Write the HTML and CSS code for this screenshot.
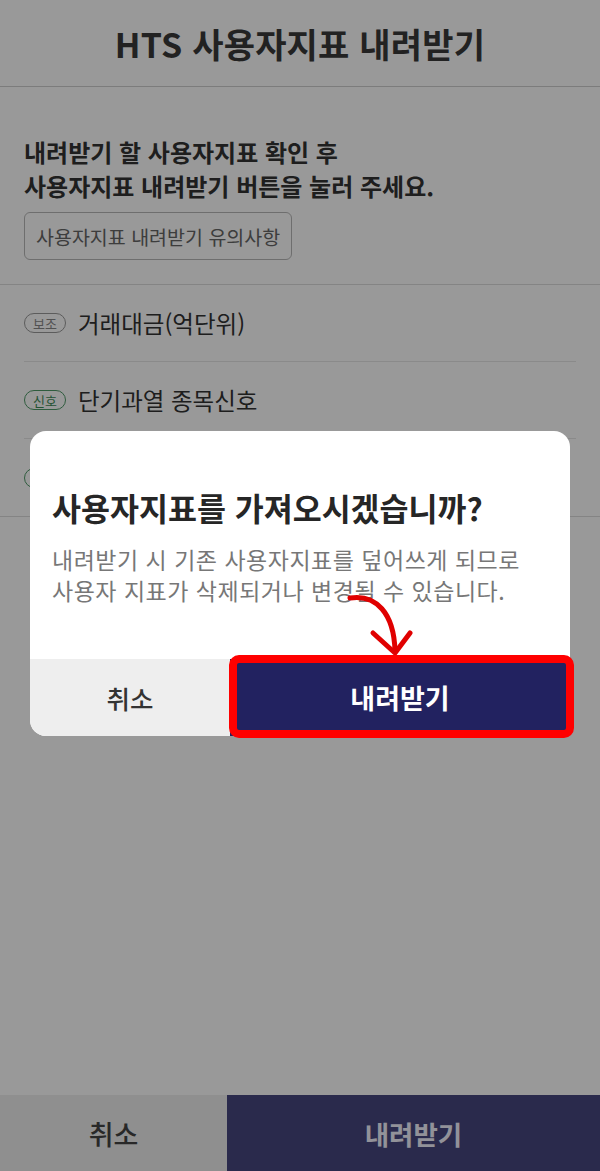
FILE: index.html
```html
<!DOCTYPE html>
<html lang="ko">
<head>
    <meta charset="UTF-8">
    <meta name="viewport" content="width=device-width, initial-scale=1.0">
    <title>HTS 사용자지표 내려받기</title>
    <link rel="stylesheet" href="styles.css">
</head>
<body>
    <div class="page">
        <header class="header">
            <h1>HTS 사용자지표 내려받기</h1>
        </header>

        <section class="guide">
            <p class="guide-text">내려받기 할 사용자지표 확인 후<br>사용자지표 내려받기 버튼을 눌러 주세요.</p>
            <button class="notice-button">사용자지표 내려받기 유의사항</button>
        </section>

        <ul class="indicator-list">
            <li class="indicator">
                <span class="tag">보조</span>
                <span class="indicator-name">거래대금(억단위)</span>
            </li>
            <li class="indicator">
                <span class="tag tag-signal">신호</span>
                <span class="indicator-name">단기과열 종목신호</span>
            </li>
            <li class="indicator">
                <span class="tag tag-signal">신호</span>
            </li>
        </ul>

        <div class="spacer"></div>

        <footer class="bottom-bar">
            <button class="bottom-cancel">취소</button>
            <button class="bottom-confirm">내려받기</button>
        </footer>
    </div>

    <div class="dim">
        <div class="dialog">
            <h2 class="dialog-title">사용자지표를 가져오시겠습니까?</h2>
            <p class="dialog-text">내려받기 시 기존 사용자지표를 덮어쓰게 되므로<br>사용자 지표가 삭제되거나 변경될 수 있습니다.</p>

            <!-- arrow pointing at the confirm button -->
            <svg class="pointer" width="100" height="70" viewBox="0 0 100 70">
                <path d="M10 7 C 36 3, 54 22, 55 60" fill="none" stroke="#e00000" stroke-width="5" stroke-linecap="round"/>
                <path d="M33 42 L55 62 L70 42" fill="none" stroke="#e00000" stroke-width="5" stroke-linecap="round" stroke-linejoin="round"/>
            </svg>

            <div class="dialog-buttons">
                <button class="dialog-cancel">취소</button>
                <button class="dialog-confirm">
                    내려받기
                    <span class="highlight"></span>
                </button>
            </div>
        </div>
    </div>
</body>
</html>
```

FILE: styles.css
```css
* {
    box-sizing: border-box;
}

body {
    margin: 0;
    background-color: #fff;
    font-family: "Noto Sans CJK KR", "Noto Sans", sans-serif;
    color: #333;
}

button {
    font-family: inherit;
    border: none;
    cursor: pointer;
}

.page {
    display: flex;
    flex-direction: column;
    height: 100vh;
}

.header {
    height: 87px;
    border-bottom: 1px solid #cfcfcf;
    display: flex;
    align-items: center;
    justify-content: center;
}

.header h1 {
    margin: 0;
    font-size: 34px;
    font-weight: 700;
    color: #3a3a3a;
    letter-spacing: 0.2px;
}

.guide {
    padding: 48px 24px 24px;
    border-bottom: 1px solid #dcdcdc;
}

.guide-text {
    margin: 0;
    font-size: 24px;
    line-height: 34px;
    font-weight: 700;
    color: #333;
}

.notice-button {
    margin-top: 9px;
    height: 48px;
    padding: 0 11px;
    background: #fff;
    border: 1px solid #b8b8b8;
    border-radius: 6px;
    font-size: 19.5px;
    color: #666;
}

.indicator-list {
    list-style: none;
    margin: 0;
    padding: 0;
    border-bottom: 1px solid #dcdcdc;
}

.indicator {
    display: flex;
    align-items: center;
    gap: 12px;
    height: 77px;
    margin: 0 24px;
    border-bottom: 1px solid #e6e6e6;
}

.indicator:last-child {
    border-bottom: none;
}

.tag {
    display: inline-flex;
    align-items: center;
    height: 20px;
    padding: 0 8px;
    border: 1px solid #999;
    border-radius: 10px;
    font-size: 13px;
    color: #888;
}

.tag-signal {
    border-color: #4f9a68;
    color: #3f8c58;
}

.indicator-name {
    font-size: 23.5px;
    color: #333;
}

.spacer {
    flex: 1;
}

.bottom-bar {
    display: flex;
    height: 76px;
}

.bottom-cancel {
    width: 227px;
    background-color: #eeeeee;
    font-size: 27px;
    font-weight: 500;
    color: #444;
}

.bottom-confirm {
    flex: 1;
    background-color: #46467f;
    font-size: 26.5px;
    font-weight: 700;
    color: #f4f4ff;
}

/* dark layer under the dialog */
.dim {
    position: fixed;
    inset: 0;
    background-color: rgba(0, 0, 0, 0.4);
    display: flex;
    align-items: center;
    justify-content: center;
    padding-bottom: 4px;
}

.dialog {
    position: relative;
    width: 540px;
    background-color: #fff;
    border-radius: 16px;
    padding-top: 56px;
}

.dialog-title {
    margin: 0 22px;
    font-size: 31.5px;
    line-height: 40px;
    font-weight: 700;
    color: #262626;
}

.dialog-text {
    margin: 17px 22px 53px;
    font-size: 23px;
    line-height: 31px;
    letter-spacing: 0.5px;
    color: #777;
}

.pointer {
    position: absolute;
    left: 310px;
    top: 160px;
}

.dialog-buttons {
    display: flex;
    height: 77px;
}

.dialog-cancel {
    width: 200px;
    background-color: #eeeeee;
    border-bottom-left-radius: 16px;
    font-size: 25.5px;
    font-weight: 500;
    color: #333;
}

.dialog-confirm {
    position: relative;
    flex: 1;
    background-color: #222260;
    border-bottom-right-radius: 16px;
    font-size: 27px;
    font-weight: 700;
    color: #fff;
}

.highlight {
    position: absolute;
    top: -4px;
    left: -1px;
    right: -4px;
    bottom: -2px;
    border: 8px solid #ff0000;
    border-radius: 10px;
}
```
